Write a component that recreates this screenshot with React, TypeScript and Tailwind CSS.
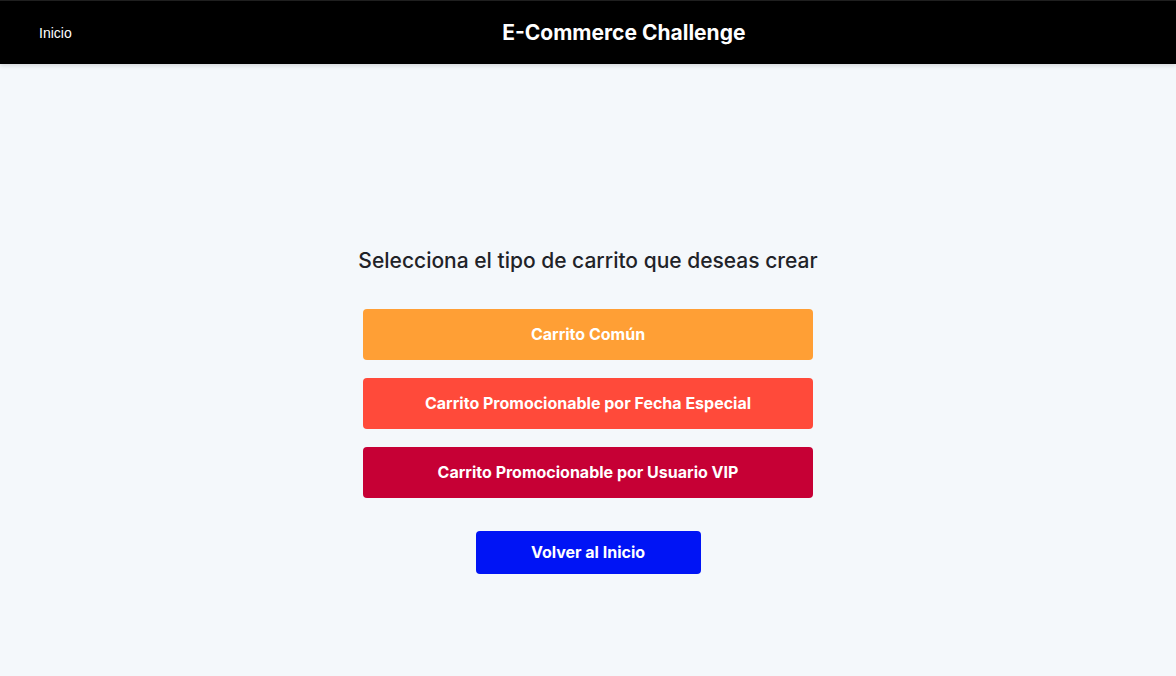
import React from 'react';

// cart type options
const cartOptions = [
  { label: 'Carrito Común', className: 'bg-[#ff9f35]' },
  { label: 'Carrito Promocionable por Fecha Especial', className: 'bg-[#ff4a3a]' },
  { label: 'Carrito Promocionable por Usuario VIP', className: 'bg-[#c60035]' },
];

export default function App() {
  return (
    <div className="min-h-screen flex flex-col bg-[#f4f8fb] font-['Inter',sans-serif]">
      <header className="h-16 bg-black border-t border-[#1f1f1f] flex items-center shadow-[0_2px_4px_rgba(0,0,0,0.12)] relative z-10">
        <a href="#" className="pl-[39px] text-white text-sm font-['Liberation_Sans',sans-serif]">
          Inicio
        </a>
        <h1 className="flex-1 text-center text-white text-[21px] font-bold">E-Commerce Challenge</h1>
      </header>

      <main className="flex-1 flex flex-col items-center pt-[181px]">
        <h2 className="text-[21px] font-medium text-[#1f2328] mb-[32px]">
          Selecciona el tipo de carrito que deseas crear
        </h2>

        <div className="flex flex-col gap-[18px] w-[450px]">
          {cartOptions.map((option) => (
            <button
              key={option.label}
              className={`${option.className} h-[51px] rounded text-white font-bold text-base`}
            >
              {option.label}
            </button>
          ))}
        </div>

        <button className="mt-[33px] w-[225px] h-[43px] rounded bg-[#0014f5] text-white font-bold text-base">
          Volver al Inicio
        </button>
      </main>
    </div>
  );
}
